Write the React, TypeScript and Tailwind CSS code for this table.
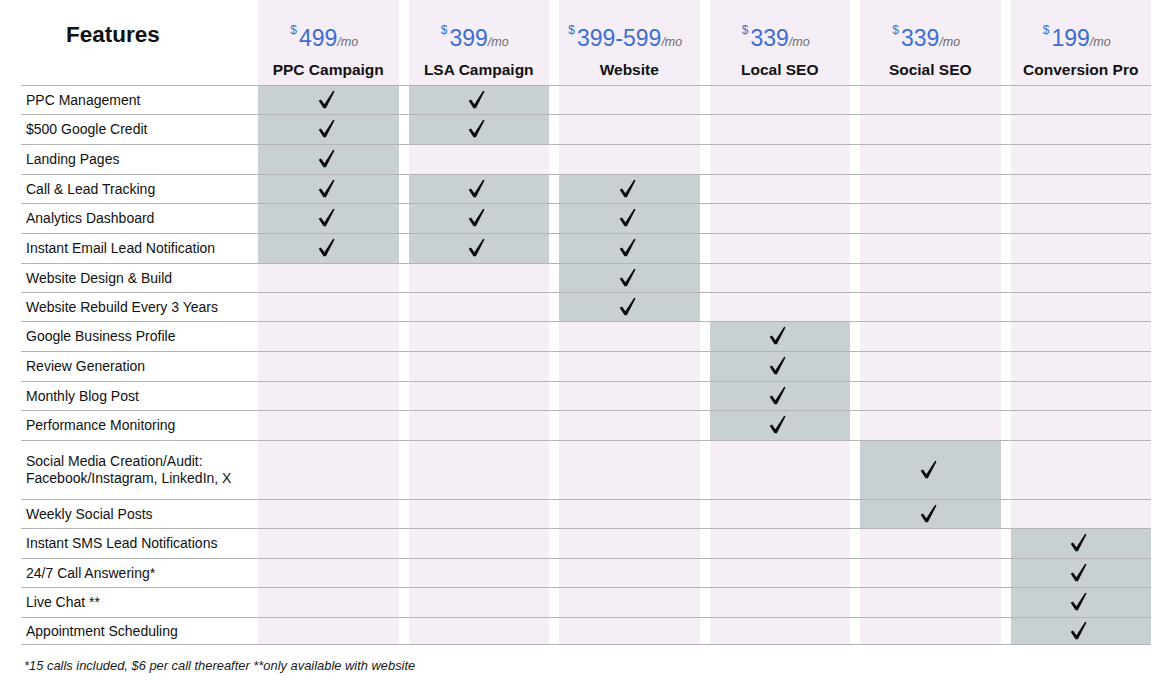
import React from "react";

interface Plan {
  price: string;
  name: string;
}

interface FeatureRow {
  label: React.ReactNode;
  h: string;
  checks: number[];
}

const PLANS: Plan[] = [
  { price: "499", name: "PPC Campaign" },
  { price: "399", name: "LSA Campaign" },
  { price: "399-599", name: "Website" },
  { price: "339", name: "Local SEO" },
  { price: "339", name: "Social SEO" },
  { price: "199", name: "Conversion Pro" },
];

const ROWS: FeatureRow[] = [
  { label: "PPC Management", h: "h-[29px]", checks: [0, 1] },
  { label: "$500 Google Credit", h: "h-[30px]", checks: [0, 1] },
  { label: "Landing Pages", h: "h-[30px]", checks: [0] },
  { label: "Call & Lead Tracking", h: "h-[29px]", checks: [0, 1, 2] },
  { label: "Analytics Dashboard", h: "h-[30px]", checks: [0, 1, 2] },
  { label: "Instant Email Lead Notification", h: "h-[30px]", checks: [0, 1, 2] },
  { label: "Website Design & Build", h: "h-[29px]", checks: [2] },
  { label: "Website Rebuild Every 3 Years", h: "h-[29px]", checks: [2] },
  { label: "Google Business Profile", h: "h-[30px]", checks: [3] },
  { label: "Review Generation", h: "h-[30px]", checks: [3] },
  { label: "Monthly Blog Post", h: "h-[29px]", checks: [3] },
  { label: "Performance Monitoring", h: "h-[30px]", checks: [3] },
  {
    label: (
      <>
        Social Media Creation/Audit:
        <br />
        Facebook/Instagram, LinkedIn, X
      </>
    ),
    h: "h-[59px]",
    checks: [4],
  },
  { label: "Weekly Social Posts", h: "h-[29px]", checks: [4] },
  { label: "Instant SMS Lead Notifications", h: "h-[30px]", checks: [5] },
  { label: "24/7 Call Answering*", h: "h-[29px]", checks: [5] },
  { label: "Live Chat **", h: "h-[30px]", checks: [5] },
  { label: "Appointment Scheduling", h: "h-[27px]", checks: [5] },
];

const GRID = "grid grid-cols-[227px_repeat(6,140.5px)] gap-x-[10px]";

export default function App() {
  return (
    <div className="w-[1175px] h-[681px] bg-white font-['Liberation_Sans',Arial,sans-serif] text-[#111] pl-[21px]">
      <div className="w-[1130px]">
        {/* Header */}
        <div className={`${GRID} h-[86px] border-b border-[#b4b4b6]`}>
          <div className="pl-[45px] pt-[24px]">
            <span className="text-[22.5px] font-bold leading-none">Features</span>
          </div>
          {PLANS.map((p) => (
            <div key={p.name} className="bg-[#f5eef6] flex flex-col items-center pt-[27px]">
              <div className="leading-none whitespace-nowrap text-[#3d6fcf] -ml-[8px]">
                <span className="text-[12px] align-top relative -top-[3px] mr-[2px]">$</span>
                <span className="text-[23px]">{p.price}</span>
                <span className="text-[12.5px] italic text-[#6b6b6b]">/mo</span>
              </div>
              <div className="mt-[12px] text-[15.5px] font-bold leading-none">{p.name}</div>
            </div>
          ))}
        </div>

        {/* Feature rows */}
        {ROWS.map((r, i) => (
          <div key={i} className={`${GRID} ${r.h} border-b border-[#b4b4b6]`}>
            <div className="flex items-center pl-[5px] text-[14px] leading-[17px]">{r.label}</div>
            {PLANS.map((_, c) => {
              const on = r.checks.includes(c);
              return (
                <div
                  key={c}
                  className={`flex items-center justify-center ${on ? "bg-[#c8d0d3]" : "bg-[#f5eef6]"}`}
                >
                  {on && <Check />}
                </div>
              );
            })}
          </div>
        ))}

        <p className="mt-[14px] pl-[3px] text-[12.9px] italic leading-[14px] text-[#1a1a1a]">
          *15 calls included, $6 per call thereafter **only available with website
        </p>
      </div>
    </div>
  );
}

function Check() {
  return (
    <svg width="17" height="19" viewBox="0 0 16 18" className="-mt-[2px] -ml-[4px]">
      <path
        d="M0.6 10.2 L2.8 9.0 L6.0 13.4 L14.3 0.6 L15.6 1.5 L7.4 17.4 L5.2 17.4 Z"
        fill="#0a0a0a"
      />
    </svg>
  );
}
